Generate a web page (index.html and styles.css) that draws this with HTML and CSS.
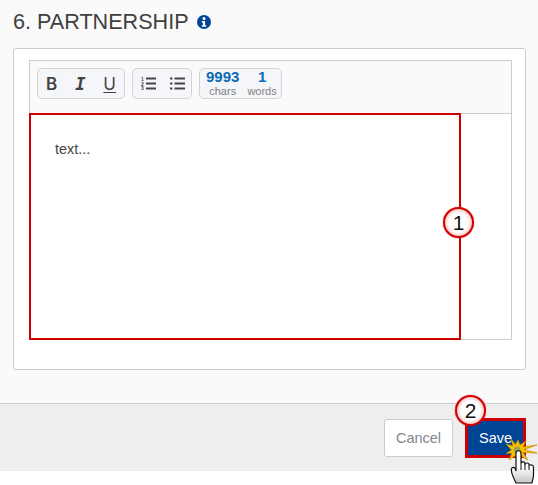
FILE: index.html
```html
<!DOCTYPE html>
<html lang="en">
<head>
  <meta charset="UTF-8">
  <title>Partnership</title>
  <link rel="stylesheet" href="styles.css">
</head>
<body>
  <div class="content">
    <h1 class="title">6. PARTNERSHIP
      <svg class="info-icon" width="14" height="14" viewBox="0 0 14 14">
        <circle cx="7" cy="7" r="7" fill="#004494"/>
        <circle cx="7" cy="3.4" r="1.5" fill="#fff"/>
        <path d="M4.8 5.900h3.300v4.300h1.100v1.500H4.800v-1.500h1.100V7.400H4.800z" fill="#fff"/>
      </svg>
    </h1>
    <div class="card">
      <div class="editor">
        <div class="toolbar">
          <div class="tool-group format-group">
            <span class="tool-b">B</span>
            <span class="tool-i">I</span>
            <span class="tool-u">U</span>
          </div>
          <div class="tool-group list-group">
            <svg width="15" height="14" viewBox="0 0 15 14">
              <text x="0" y="4" class="list-num">1</text>
              <text x="0" y="8.7" class="list-num">2</text>
              <text x="0" y="13.4" class="list-num">3</text>
              <path d="M5 1.500H15M5 6.500H15M5 11.500H15" stroke="#444" stroke-width="2"/>
            </svg>
            <svg width="15" height="14" viewBox="0 0 15 14">
              <path d="M0 1.500H2.400M0 6.500H2.400M0 11.500H2.400M4.500 1.500H15M4.500 6.500H15M4.500 11.500H15" stroke="#444" stroke-width="2"/>
            </svg>
          </div>
          <div class="tool-group count-group">
            <div class="count">
              <b>9993</b>
              <span>chars</span>
            </div>
            <div class="count">
              <b>1</b>
              <span>words</span>
            </div>
          </div>
        </div>
        <div class="edit-area">
          <p class="edit-text">text...</p>
          <div class="highlight-box"></div>
          <div class="callout callout-one">1</div>
        </div>
      </div>
    </div>
  </div>

  <div class="footer">
    <button class="btn btn-cancel">Cancel</button>
    <div class="save-wrap">
      <button class="btn btn-save">Save</button>
      <div class="callout callout-two">2</div>
      <svg class="hand" width="34" height="47" viewBox="0 0 34 47">
        <defs>
          <linearGradient id="hand-fill" x1="0" y1="0" x2="0" y2="1">
            <stop offset="0.5" stop-color="#fff"/>
            <stop offset="1" stop-color="#c4c4c4"/>
          </linearGradient>
        </defs>
        <path d="M14 2L16 7L22 3L19 9L33 7L20 11.500L33 15L19 14.500L24 22L16 17.500L14 24L11.500 17.500L5 22L8 15L2 15.500L7.500 12L2 6L9 8L7 1L11.500 6.500Z" fill="#f5c400" stroke="#c98a00" stroke-width=".7"/>
        <circle cx="13" cy="12" r="3.500" fill="#a3a04a"/>
        <path d="M12 45C10 40 6.500 35 7.500 31C8 28.500 10.500 29 11.500 31L12 33V15C12 12 17 12 17 15V25C17.500 23.500 21 23.500 21 25.500V26.500C21.500 24.500 25 24.500 25 26.500V28C25.500 26 29.500 26.500 29.500 29V37C29.500 40 28.500 42 28 45Z" fill="url(#hand-fill)" stroke="#111" stroke-width="1.200"/>
        <path d="M17 25V32M21 26V32M25 28V32" stroke="#111" stroke-width="1" fill="none"/>
      </svg>
    </div>
  </div>
</body>
</html>
```

FILE: styles.css
```css
* {
  box-sizing: border-box;
}
html, body {
  margin: 0;
  padding: 0;
}
body {
  height: 485px;
  overflow: hidden;
  background: #fff;
  font-family: 'Liberation Sans', Arial, sans-serif;
  color: #404040;
}
.content {
  height: 403px;
  padding: 10px 12px 0 13px;
  background: #fafafa;
}
.title {
  display: flex;
  align-items: center;
  gap: 8px;
  margin: 0 0 15px;
  height: 23px;
  font-size: 21.6px;
  font-weight: 400;
  color: #404040;
}
.info-icon {
  margin-top: 1px;
}
.card {
  height: 322px;
  padding: 11px 14px 0 15px;
  background: #fff;
  border: 1px solid #ccc;
  border-radius: 3px;
}
.editor {
  height: 280px;
  margin-right: -1px;
  border: 1px solid #ccc;
}
.toolbar {
  display: flex;
  gap: 7px;
  height: 52px;
  padding: 7px 7px 0;
  background: #fafafa;
}
.tool-group {
  display: flex;
  align-items: center;
  height: 31px;
  background: #f5f6fa;
  border: 1px solid #d4d4d4;
  border-radius: 5px;
}
.format-group {
  width: 88px;
  justify-content: space-between;
  padding: 0 8px;
  font-size: 17px;
  color: #444;
}
.tool-b {
  font-family: Inter, sans-serif;
  font-weight: 600;
}
.tool-i {
  font-family: 'DejaVu Sans Mono', monospace;
  font-style: italic;
  font-weight: 700;
}
.tool-u {
  font-family: Inter, sans-serif;
  text-decoration: underline;
  text-underline-offset: 2px;
}
.list-group {
  width: 60px;
  gap: 14px;
  padding-left: 8px;
}
.list-num {
  font-size: 5px;
  font-weight: 700;
  fill: #444;
}
.count-group {
  gap: 8px;
  width: 83px;
  padding: 0 0 0 6px;
}
.count {
  display: flex;
  flex-direction: column;
  align-items: center;
  line-height: 14px;
}
.count b {
  font-size: 15px;
  color: #0a6ab5;
}
.count span {
  font-size: 11px;
  color: #808080;
}
.edit-area {
  position: relative;
  height: 226px;
  background: #fff;
  border-top: 1px solid #ccc;
}
.edit-text {
  margin: 0;
  padding: 27px 0 0 25px;
  font-size: 14.4px;
  line-height: 16px;
  color: #444;
}
.highlight-box {
  position: absolute;
  left: -1px;
  top: -1px;
  width: 432px;
  height: 227px;
  border: 2px solid #cc0000;
}
.callout {
  position: absolute;
  width: 31px;
  height: 31px;
  display: flex;
  align-items: center;
  justify-content: center;
  font-size: 21px;
  color: #111;
  background: radial-gradient(circle, #fff 50%, #f08a8a 95%);
  border: 2px solid #d40000;
  border-radius: 50%;
  box-shadow: 0 0 1px #d40000;
}
.callout-one {
  left: 413px;
  top: 93px;
}
.callout-two {
  left: -10px;
  top: -23px;
}
.footer {
  display: flex;
  justify-content: flex-end;
  align-items: center;
  gap: 12px;
  height: 68px;
  padding: 0 12px 0 0;
  background: #eee;
  border-top: 1px solid #ccc;
}
.btn {
  font-family: 'Liberation Sans', Arial, sans-serif;
  font-size: 14.5px;
  padding: 0;
}
.btn-cancel {
  width: 69px;
  height: 38px;
  margin-top: 1px;
  color: #7f8790;
  background: #fff;
  border: 1px solid #ccc;
  border-radius: 3px;
}
.save-wrap {
  position: relative;
  margin-top: 1px;
}
.btn-save {
  display: block;
  width: 61px;
  height: 40px;
  color: #fff;
  background: #004494;
  border: 3px solid #cc0000;
}
.hand {
  position: absolute;
  left: 39px;
  top: 20px;
}
```
